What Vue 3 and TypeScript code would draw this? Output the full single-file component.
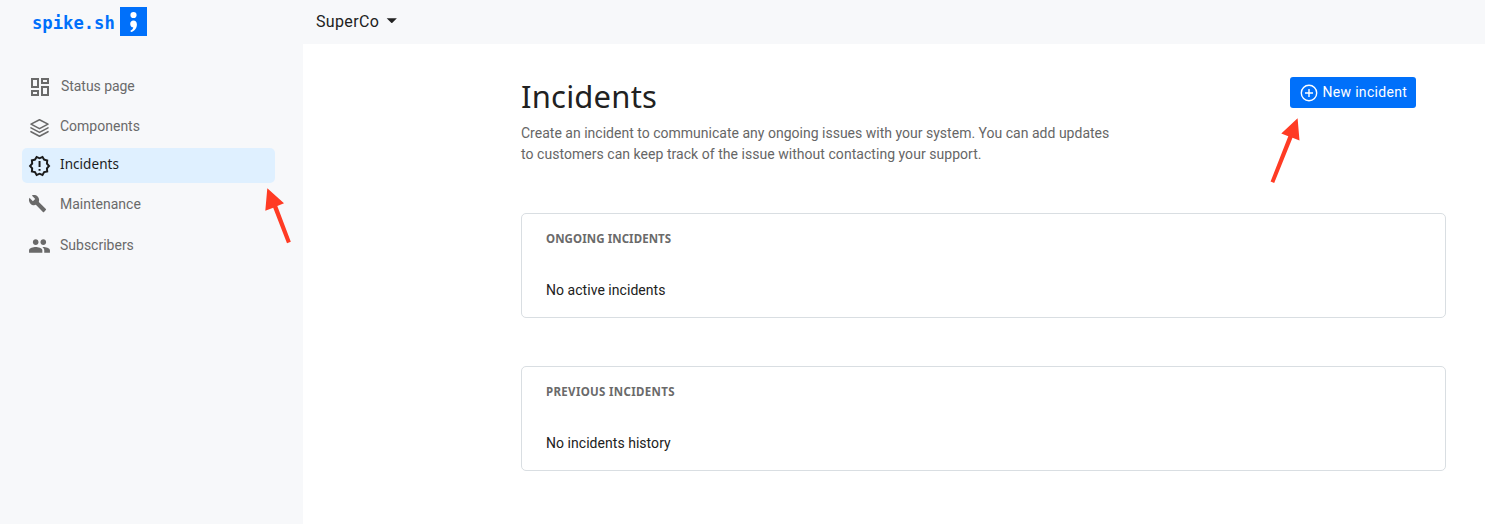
<script setup lang="ts">
interface NavItem {
  key: string
  label: string
  active?: boolean
}

interface Panel {
  key: string
  title: string
  message: string
}

const navItems: NavItem[] = [
  { key: 'status', label: 'Status page' },
  { key: 'components', label: 'Components' },
  { key: 'incidents', label: 'Incidents', active: true },
  { key: 'maintenance', label: 'Maintenance' },
  { key: 'subscribers', label: 'Subscribers' },
]

const panels: Panel[] = [
  { key: 'ongoing', title: 'ONGOING INCIDENTS', message: 'No active incidents' },
  { key: 'previous', title: 'PREVIOUS INCIDENTS', message: 'No incidents history' },
]
</script>

<template>
  <div class="app">
    <aside class="sidebar">
      <a class="brand">
        <span class="brand-name">spike.sh</span>
        <svg class="brand-mark" width="27" height="29" viewBox="0 0 27 29">
          <rect width="27" height="29" fill="#0070fa" />
          <circle cx="13.5" cy="8" r="3.1" fill="#fff" />
          <path d="M13.4 13.5c2.1 0 3.5 1.5 3.5 3.9 0 3.500-2.300 6.700-6 7.600l-.5-1.300c1.800-.7 2.800-2 2.800-3.400-1.700 0-3-1.500-3-3.400 0-2 1.300-3.400 3.200-3.400z" fill="#fff" />
        </svg>
      </a>
      <nav class="nav">
        <a v-for="item in navItems" :key="item.key" class="nav-item" :class="[item.key, { active: item.active }]">
          <svg class="nav-icon" width="24" height="24" viewBox="0 0 24 24" fill="currentColor">
            <path v-if="item.key === 'status'" d="M19 5v2h-4V5h4M9 5v6H5V5h4m10 8v6h-4v-6h4M9 17v2H5v-2h4M21 3h-8v6h8V3zM11 3H3v10h8V3zm10 8h-8v10h8V11zm-10 4H3v6h8v-6z" />
            <g v-else-if="item.key === 'components'" fill="none" stroke="currentColor" stroke-width="1.6" stroke-linejoin="round" stroke-linecap="round">
              <path d="M11.500 4.700 20 9.100l-8.500 4.500L3 9.100z" />
              <path d="m3 12.900 8.500 4.500 8.500-4.500M3 16.700l8.500 4.500 8.500-4.500" />
            </g>
            <path v-else-if="item.key === 'incidents'" transform="translate(-.2 1.200) scale(.98)" d="M23 12l-2.440-2.780.34-3.680-3.610-.82-1.890-3.180L12 3 8.600 1.540 6.710 4.720l-3.610.81.34 3.680L1 12l2.440 2.780-.34 3.690 3.610.82 1.890 3.180L12 21l3.400 1.460 1.890-3.180 3.610-.82-.34-3.680L23 12zm-4.510 2.110l.26 2.790-2.740.62-1.430 2.410L12 18.820l-2.580 1.110-1.430-2.410-2.740-.62.26-2.800L3.660 12l1.850-2.120-.26-2.780 2.740-.61 1.430-2.410L12 5.180l2.580-1.110 1.430 2.410 2.740.62-.26 2.790L20.340 12l-1.850 2.110zM11 15h2v2h-2zm0-8h2v6h-2z" />
            <path v-else-if="item.key === 'maintenance'" transform="translate(.2 1.200) scale(.78)" d="M22.700 19l-9.100-9.100c.9-2.300.4-5-1.500-6.900-2-2-5-2.400-7.400-1.300L9 6 6 9 1.600 4.700C.4 7.100.9 10.100 2.900 12.100c1.900 1.900 4.600 2.400 6.900 1.500l9.100 9.100c.4.4 1 .4 1.400 0l2.300-2.300c.5-.4.5-1.100.1-1.400z" />
            <path v-else transform="translate(.1 .6) scale(.95)" d="M16 11c1.660 0 2.990-1.340 2.990-3S17.660 5 16 5s-3 1.340-3 3 1.340 3 3 3zm-8 0c1.660 0 2.990-1.340 2.990-3S9.660 5 8 5 5 6.340 5 8s1.340 3 3 3zm0 2c-2.330 0-7 1.170-7 3.500V19h14v-2.500c0-2.330-4.670-3.500-7-3.500zm8 0c-.29 0-.62.02-.97.05 1.160.84 1.970 1.970 1.970 3.450V19h6v-2.500c0-2.330-4.670-3.500-7-3.500z" />
          </svg>
          <span class="nav-label">{{ item.label }}</span>
        </a>
      </nav>
    </aside>

    <div class="content">
      <header class="topbar">
        <span class="team">SuperCo</span>
        <svg class="caret" width="12" height="6" viewBox="0 0 12 6"><path d="M.7.3h10.200L6.400 4.800q-.6.5-1.200 0z" fill="#222" /></svg>
      </header>
      <main class="page">
        <div class="page-head">
          <div class="intro">
            <h1>Incidents</h1>
            <p>
              <span class="line first">Create an incident to communicate any ongoing issues with your system. You can add updates</span>
              <span class="line second">to customers can keep track of the issue without contacting your support.</span>
            </p>
          </div>
          <button class="new-button" type="button">
            <svg width="18" height="18" viewBox="0 0 18 18" fill="none" stroke="#fff" stroke-width="1.400">
              <circle cx="9" cy="9" r="7.700" />
              <path d="M9 5v8M5 9h8" />
            </svg>
            <span>New incident</span>
          </button>
        </div>
        <section v-for="panel in panels" :key="panel.key" class="panel" :class="panel.key">
          <h2>{{ panel.title }}</h2>
          <p>{{ panel.message }}</p>
        </section>
      </main>
    </div>

    <svg class="arrows" width="1485" height="524" viewBox="0 0 1485 524" fill="#ff3b24">
      <path d="M267.300 188.300 284 203.300 277.300 206 290.800 241.700 287 243.300 273.200 207.800 265.300 210.700z" />
      <path d="M1297.600 118.300 1299.500 140.400 1292.500 137.800 1274.200 183 1270.600 181.600 1288.300 136.200 1281.300 133.400z" />
    </svg>
  </div>
</template>

<style>
body {
  margin: 0;
  background: #fff;
}
</style>

<style scoped>
.app {
  position: relative;
  display: flex;
  width: 1485px;
  height: 524px;
  overflow: hidden;
  background: #fff;
  font-family: Roboto, "Liberation Sans", sans-serif;
  color: #212121;
}

.sidebar {
  flex: 0 0 303px;
  box-sizing: border-box;
  background: #f7f8fa;
  padding: 7px 28px 0 22px;
}

.brand {
  display: flex;
  height: 29px;
  padding-left: 10px;
  color: #0070fa;
}

.brand-name {
  width: 88px;
  font: bold 17.2px/32px "DejaVu Sans Mono", monospace;
}

.nav {
  padding-top: 34px;
}

.nav-item {
  display: flex;
  height: 35px;
  box-sizing: border-box;
  padding-left: 6px;
  border-radius: 5px;
  color: #6a6a6a;
  font-size: 14px;
  line-height: 33px;
}

.nav-icon {
  flex: none;
  margin-top: 5px;
}

.nav-label {
  margin-left: 8px;
}

.status .nav-label { margin-left: 9px; letter-spacing: -0.05px; }
.components { margin-top: 5px; }
.incidents { margin-top: 3px; }
.maintenance { margin-top: 5px; }
.subscribers { margin-top: 6px; }

.active {
  background: #dff0ff;
  color: #1c1c1c;
}

.active .nav-label {
  font: 13.5px/32px "Noto Sans", sans-serif;
  letter-spacing: 0.06px;
}

.content {
  flex: 1;
}

.topbar {
  display: flex;
  height: 44px;
  box-sizing: border-box;
  padding-left: 13px;
  background: #f7f8fa;
}

.team {
  width: 70px;
  font-size: 16px;
  line-height: 43px;
  letter-spacing: 0.35px;
}

.caret {
  margin-top: 18px;
}

.page {
  padding: 33px 39px 0 218px;
}

.page-head {
  display: flex;
  justify-content: space-between;
  height: 136px;
  padding-right: 30px;
}

h1, h2, p {
  margin: 0;
}

h1 {
  font: 400 31px/38px "Noto Sans", sans-serif;
  letter-spacing: 0.2px;
}

.intro p {
  margin-top: 8px;
  font-size: 14px;
  line-height: 21px;
  color: #666;
}

.line {
  display: block;
  white-space: nowrap;
  letter-spacing: 0.01px;
}

.second {
  letter-spacing: 0.04px;
}

.new-button {
  display: flex;
  align-items: center;
  width: 126px;
  height: 31px;
  padding: 0 0 0 10px;
  border: 0;
  border-radius: 3px;
  background: #0070fa;
  color: #fff;
  font: 400 14px/28px Roboto, sans-serif;
  white-space: nowrap;
}

.new-button span {
  margin: 0 0 2px 4.5px;
  letter-spacing: 0.31px;
}

.panel {
  height: 105px;
  box-sizing: border-box;
  padding: 17px 24px 0;
  border: 1px solid #d9dee2;
  border-radius: 5px;
}

.panel + .panel {
  margin-top: 48px;
}

.panel h2 {
  font: 700 11.500px/16px "Noto Sans", sans-serif;
  letter-spacing: 0.08px;
  color: #6a6a6a;
}

.previous h2 {
  letter-spacing: 0.32px;
}

.panel p {
  margin-top: 33px;
  font-size: 14px;
  line-height: 20px;
  letter-spacing: 0.04px;
}

.arrows {
  position: absolute;
  inset: 0;
  pointer-events: none;
}
</style>
